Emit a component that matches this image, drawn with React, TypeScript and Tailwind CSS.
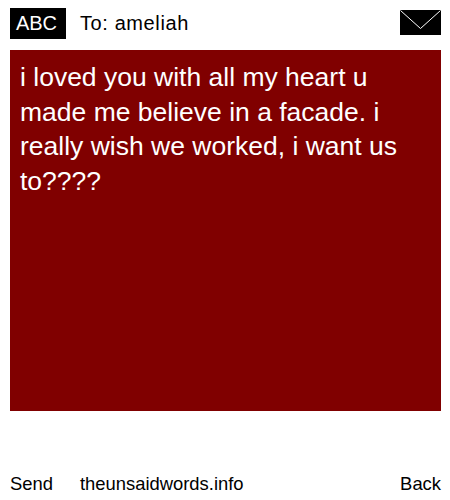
export default function App() {
  return (
    <div className="w-[450px] h-[500px] bg-white text-black font-['Liberation_Sans',Arial,sans-serif] flex flex-col">
      {/* Header */}
      <div className="h-[50px] pl-[10px] pr-[9px] pb-[3px] flex items-center">
        <div className="w-[56px] h-[31px] pr-[3px] pb-[2px] bg-black text-white text-[20px] flex items-center justify-center">ABC</div>
        <div className="ml-[14px] mb-[1px] text-[20px] tracking-[0.6px]">To: ameliah</div>
        <svg className="ml-auto mb-[2px]" width="41" height="25" viewBox="0 0 41 25">
          <rect width="41" height="25" fill="#000" />
          <path d="M0.5 0.5 L20.5 18.5 L40.5 0.5" fill="none" stroke="#fff" strokeWidth="1" />
        </svg>
      </div>

      {/* Message */}
      <div className="mx-[10px] w-[431px] h-[361px] bg-[#800000] text-white text-[26.5px] leading-[34.5px] px-[10px] py-[10px]">
        i loved you with all my heart u made me believe in a facade. i really wish we worked, i want us to????
      </div>

      {/* Footer */}
      <div className="mt-auto h-[26px] mb-[3px] pl-[10px] pr-[9px] flex items-center text-[18.4px]">
        <span>Send</span>
        <span className="ml-[27px]">theunsaidwords.info</span>
        <span className="ml-auto">Back</span>
      </div>
    </div>
  );
}
